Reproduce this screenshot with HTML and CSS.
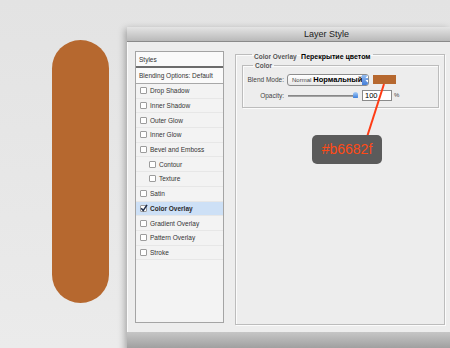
FILE: index.html
```html
<!DOCTYPE html>
<html lang="en">
<head>
    <meta charset="UTF-8">
    <title>Layer Style</title>
    <link rel="stylesheet" href="styles.css">
</head>
<body>
    <div class="stage">
        <div class="pill"></div>

        <div class="window">
            <div class="titlebar">Layer Style</div>
            <div class="content">
                <ul class="styles-list">
                    <li class="head">Styles</li>
                    <li class="blend">Blending Options: Default</li>
                    <li class="item"><span class="cb"></span>Drop Shadow</li>
                    <li class="item"><span class="cb"></span>Inner Shadow</li>
                    <li class="item"><span class="cb"></span>Outer Glow</li>
                    <li class="item"><span class="cb"></span>Inner Glow</li>
                    <li class="item"><span class="cb"></span>Bevel and Emboss</li>
                    <li class="item sub"><span class="cb"></span>Contour</li>
                    <li class="item sub"><span class="cb"></span>Texture</li>
                    <li class="item"><span class="cb"></span>Satin</li>
                    <li class="item selected">
                        <span class="cb checked">
                            <svg width="8" height="8" viewBox="0 0 8 8"><path d="M1.2 4.2 L3.2 6.6 L7 0.8" fill="none" stroke="#1d2c4a" stroke-width="1.5"/></svg>
                        </span>Color Overlay
                    </li>
                    <li class="item"><span class="cb"></span>Gradient Overlay</li>
                    <li class="item"><span class="cb"></span>Pattern Overlay</li>
                    <li class="item"><span class="cb"></span>Stroke</li>
                </ul>

                <fieldset class="group">
                    <legend><span class="en">Color Overlay</span> <span class="ru">Перекрытие цветом</span></legend>
                    <fieldset class="sub-group">
                        <legend>Color</legend>
                        <div class="row">
                            <span class="lbl">Blend Mode:</span>
                            <div class="select">
                                <span class="opt">Normal</span>
                                <span class="opt-ru">Нормальный</span>
                                <span class="stepper">
                                    <svg width="11" height="12" viewBox="0 0 11 12"><path d="M3.5 5 L5.5 2.5 L7.5 5 Z M3.5 7 L5.5 9.5 L7.5 7 Z" fill="#fff"/></svg>
                                </span>
                            </div>
                            <span class="swatch"></span>
                        </div>
                        <div class="row">
                            <span class="lbl">Opacity:</span>
                            <div class="slider"><span class="track"></span><span class="knob"></span></div>
                            <span class="num">100</span>
                            <span class="pct">%</span>
                        </div>
                    </fieldset>
                </fieldset>
            </div>
            <div class="window-foot"></div>
        </div>
    </div>

    <svg class="pointer" width="450" height="348" viewBox="0 0 450 348">
        <line x1="384" y1="84" x2="367" y2="137" stroke="#ff3b14" stroke-width="2"/>
    </svg>
    <div class="callout">#b6682f</div>
</body>
</html>
```

FILE: styles.css
```css
html, body {
    margin: 0;
    padding: 0;
}

body {
    width: 450px;
    height: 348px;
    overflow: hidden;
    position: relative;
    background: linear-gradient(#e3e3e3, #ebebeb);
    font-family: "Liberation Sans", Arial, sans-serif;
}

.stage {
    display: flex;
    align-items: flex-start;
}

.pill {
    flex-shrink: 0;
    margin: 40px 0 0 52px;
    width: 57px;
    height: 263px;
    border-radius: 29px;
    background: #b6682f;
}

/* the dialog is cut off by the right edge of the picture */
.window {
    flex: 1;
    min-width: 0;
    margin: 27px 0 0 18px;
    background: #ededed;
    box-shadow: -2px 2px 7px rgba(0, 0, 0, 0.3);
}

.titlebar {
    box-sizing: border-box;
    height: 15px;
    line-height: 14px;
    padding-left: 76px;
    text-align: center;
    font-size: 9px;
    color: #222;
    background: linear-gradient(#e4e4e4, #b9b9b9);
    border-bottom: 1px solid #8a8a8a;
}

.content {
    display: flex;
    align-items: flex-start;
    height: 290px;
    box-sizing: border-box;
    padding: 9px 0 0 7px;
    border-left: 1px solid #fafafa;
}

/* left list of effects */
.styles-list {
    flex-shrink: 0;
    list-style: none;
    margin: 0;
    padding: 0;
    width: 89px;
    height: 272px;
    box-sizing: border-box;
    border: 1px solid #a4a4a4;
    background: #f3f3f3;
    font-size: 6.5px;
    color: #333;
}

.styles-list li {
    display: flex;
    align-items: center;
    box-sizing: border-box;
    white-space: nowrap;
}

.styles-list .head {
    height: 16px;
    padding-left: 3px;
    background: #fafafa;
    border-bottom: 2px solid #6c6c6c;
}

.styles-list .blend {
    height: 16px;
    padding-left: 3px;
    background: #fafafa;
    border-bottom: 1px solid #a8a8a8;
}

.styles-list .item {
    height: 14.7px;
    padding-left: 4px;
    border-bottom: 1px solid #e7e7e7;
}

.styles-list .sub {
    padding-left: 13px;
}

.styles-list .selected {
    background: #cde0f6;
    font-weight: bold;
    color: #2a2a2a;
}

.cb {
    flex-shrink: 0;
    position: relative;
    width: 7px;
    height: 7px;
    box-sizing: border-box;
    margin-right: 3px;
    border: 1px solid #9c9c9c;
    border-radius: 1px;
    background: #fff;
}

.cb svg {
    position: absolute;
    left: -1px;
    top: -2px;
}

/* right side groups */
fieldset {
    margin: 0;
    min-width: 0;
    box-sizing: border-box;
    border: 1px solid #bcbcbc;
    box-shadow: 1px 1px 0 #fbfbfb, inset 1px 1px 0 #fbfbfb;
}

legend {
    padding: 0 2px;
    line-height: 9px;
    font-weight: bold;
}

.group {
    flex-shrink: 0;
    margin: -2.5px 0 0 11px;
    padding: 0 5px 0 6px;
    width: 210px;
    height: 276px;
}

.group legend {
    margin-left: 10px;
}

.group .en {
    font-size: 6.5px;
    color: #555;
}

.group .ru {
    font-size: 7px;
    color: #000;
}

.sub-group {
    padding: 0 0 6px 0;
}

.sub-group legend {
    margin-left: 10px;
    font-size: 6.5px;
    color: #555;
}

.row {
    display: flex;
    align-items: center;
    margin-top: 4px;
    font-size: 6.5px;
    color: #444;
}

.lbl {
    width: 41px;
    text-align: right;
    margin-right: 3px;
}

.select {
    display: flex;
    align-items: center;
    width: 82px;
    height: 12px;
    box-sizing: border-box;
    border: 1px solid #8d8d8d;
    border-radius: 3px;
    background: linear-gradient(#ffffff, #e8e8e8);
    overflow: hidden;
}

.opt {
    padding-left: 4px;
    font-size: 6px;
    color: #444;
}

.opt-ru {
    margin-left: 2px;
    font-size: 7.5px;
    font-weight: bold;
    color: #000;
}

.stepper {
    margin-left: auto;
    width: 11px;
    height: 12px;
    background: linear-gradient(#9cc2f2, #3c78d6);
}

.stepper svg {
    display: block;
    margin-top: -1px;
}

.swatch {
    margin-left: 4px;
    width: 23px;
    height: 9px;
    background: #b6682f;
}

.slider {
    position: relative;
    width: 72px;
    height: 11px;
    margin-left: 1px;
}

.track {
    position: absolute;
    left: 0;
    right: 4px;
    top: 5px;
    height: 2px;
    background: linear-gradient(#7a7a7a, #b0b0b0);
}

.knob {
    position: absolute;
    right: 2px;
    top: 2px;
    width: 5px;
    height: 6px;
    border-radius: 3px 3px 1px 1px;
    background: linear-gradient(#a8cdf6, #3d7fdc);
}

.num {
    width: 30px;
    height: 11px;
    box-sizing: border-box;
    margin-left: 2px;
    padding-left: 2px;
    border: 1px solid #8a8a8a;
    background: #fff;
    font-size: 7.5px;
    line-height: 9px;
    color: #000;
}

.pct {
    margin-left: 2px;
    font-size: 6px;
}

.window-foot {
    height: 20px;
    background: linear-gradient(#c6c6c6, #979797);
}

/* annotation over the screenshot */
.pointer {
    position: absolute;
    left: 0;
    top: 0;
}

.callout {
    position: absolute;
    left: 312px;
    top: 135px;
    width: 70px;
    height: 29px;
    border-radius: 5px;
    background: #5b5b5b;
    color: #ff4a16;
    font-size: 14px;
    line-height: 29px;
    text-align: center;
}
```
